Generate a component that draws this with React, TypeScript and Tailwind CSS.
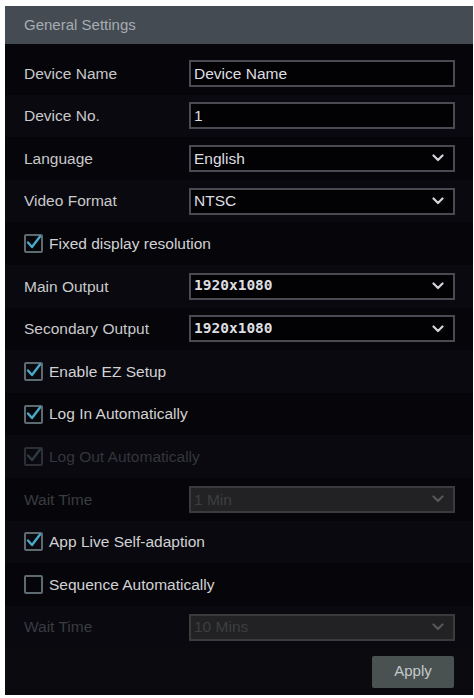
import * as React from 'react';

type Row =
  | { kind: 'text'; label: string; value: string }
  | { kind: 'select'; label: string; value: string; mono?: boolean; disabled?: boolean }
  | { kind: 'check'; label: string; checked: boolean; disabled?: boolean };

const rows: Row[] = [
  { kind: 'text', label: 'Device Name', value: 'Device Name' },
  { kind: 'text', label: 'Device No.', value: '1' },
  { kind: 'select', label: 'Language', value: 'English' },
  { kind: 'select', label: 'Video Format', value: 'NTSC' },
  { kind: 'check', label: 'Fixed display resolution', checked: true },
  { kind: 'select', label: 'Main Output', value: '1920x1080', mono: true },
  { kind: 'select', label: 'Secondary Output', value: '1920x1080', mono: true },
  { kind: 'check', label: 'Enable EZ Setup', checked: true },
  { kind: 'check', label: 'Log In Automatically', checked: true },
  { kind: 'check', label: 'Log Out Automatically', checked: true, disabled: true },
  { kind: 'select', label: 'Wait Time', value: '1 Min', disabled: true },
  { kind: 'check', label: 'App Live Self-adaption', checked: true },
  { kind: 'check', label: 'Sequence Automatically', checked: false },
  { kind: 'select', label: 'Wait Time', value: '10 Mins', disabled: true },
];

const Chevron: React.FC<{ dim?: boolean }> = ({ dim }) => (
  <svg width="12" height="8" viewBox="0 0 12 8" className="absolute right-[9px] top-1/2 -translate-y-1/2">
    <polyline
      points="1.5,1.5 6,6 10.5,1.5"
      fill="none"
      stroke={dim ? '#55555a' : '#d4d4d8'}
      strokeWidth="2.2"
      strokeLinecap="round"
      strokeLinejoin="round"
    />
  </svg>
);

const CheckBox: React.FC<{ checked: boolean; disabled?: boolean }> = ({ checked, disabled }) => (
  <div
    className={`relative h-[19px] w-[19px] shrink-0 rounded-[2px] border-2 ${
      disabled ? 'border-[#2c3034]' : 'border-[#5e6a72]'
    }`}
  >
    {checked && (
      <svg width="17" height="17" viewBox="0 0 17 17" className="absolute -left-[1px] -top-[2px]">
        <polyline
          points="3,8.5 7,13 15,2.5"
          fill="none"
          stroke={disabled ? '#2f3a3e' : '#48a9c8'}
          strokeWidth="2.4"
          strokeLinecap="round"
          strokeLinejoin="round"
        />
      </svg>
    )}
  </div>
);

const App: React.FC = () => {
  return (
    <div className="h-[698px] w-[474px] bg-white pl-[5px] pt-[6px] font-['Liberation_Sans',Arial,sans-serif]">
      <div className="flex h-[689px] w-[468px] flex-col bg-[#05050a]">
        <div className="flex h-[38px] items-center bg-[#444b53] pl-[19px] text-[15px] text-[#a7adb2]">
          General Settings
        </div>
        <div className="pt-[8px]">
          {rows.map((row, i) => {
            const dim = 'disabled' in row && row.disabled;
            return (
              <div
                key={i}
                className={`flex h-[42.6px] items-center pl-[19px] ${i % 2 === 1 ? 'bg-[#09090f]' : 'bg-[#05050a]'}`}
              >
                {row.kind === 'check' ? (
                  <div className="flex items-center gap-[6px]">
                    <CheckBox checked={row.checked} disabled={row.disabled} />
                    <span className={`text-[15.5px] ${dim ? 'text-[#34363a]' : 'text-[#d2d2d4]'}`}>{row.label}</span>
                  </div>
                ) : (
                  <>
                    <span className={`w-[165px] text-[15.5px] ${dim ? 'text-[#3a3c40]' : 'text-[#c9c9cc]'}`}>
                      {row.label}
                    </span>
                    <div
                      className={`relative flex h-[27px] w-[266px] items-center border-2 pl-[3px] ${
                        dim ? 'border-[#3b3b3e] bg-[#222224]' : 'border-[#4a4b52] bg-[#020205]'
                      }`}
                    >
                      <span
                        className={`${
                          row.kind === 'select' && row.mono
                            ? "font-['DejaVu_Sans_Mono',monospace] text-[14.5px] font-bold"
                            : 'text-[15.5px]'
                        } ${dim ? 'text-[#3d3f3f]' : 'text-[#dedee0]'}`}
                      >
                        {row.value}
                      </span>
                      {row.kind === 'select' && <Chevron dim={dim} />}
                    </div>
                  </>
                )}
              </div>
            );
          })}
        </div>
        <div className="flex flex-1 items-center justify-end bg-[#0b0b0f] pr-[19px]">
          <button className="h-[32px] w-[82px] rounded-[2px] bg-[#4a5151] text-[15px] text-[#c4cacb]">Apply</button>
        </div>
      </div>
    </div>
  );
};

export default App;
